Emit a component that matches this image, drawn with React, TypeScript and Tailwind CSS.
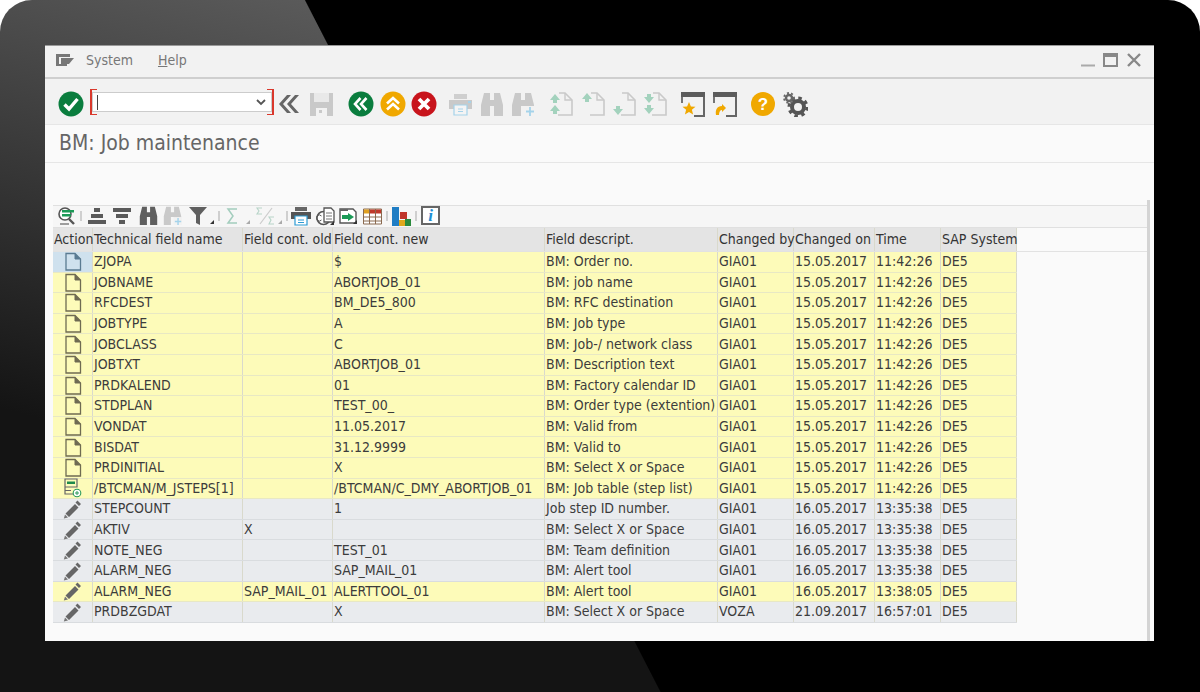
import type { ReactNode } from "react";

type Row = {
  icon: "doc" | "pen" | "tree";
  name: string;
  oldVal: string;
  newVal: string;
  descr: string;
  by: string;
  on: string;
  time: string;
  yellow: boolean;
};

const doc = (name: string, newVal: string, descr: string): Row => ({
  icon: "doc",
  name,
  oldVal: "",
  newVal,
  descr,
  by: "GIA01",
  on: "15.05.2017",
  time: "11:42:26",
  yellow: true,
});

const pen = (name: string, oldVal: string, newVal: string, descr: string, time = "13:35:38"): Row => ({
  icon: "pen",
  name,
  oldVal,
  newVal,
  descr,
  by: "GIA01",
  on: "16.05.2017",
  time,
  yellow: false,
});

const ROWS: Row[] = [
  doc("ZJOPA", "$", "BM: Order no."),
  doc("JOBNAME", "ABORTJOB_01", "BM: job name"),
  doc("RFCDEST", "BM_DE5_800", "BM: RFC destination"),
  doc("JOBTYPE", "A", "BM: Job type"),
  doc("JOBCLASS", "C", "BM: Job-/ network class"),
  doc("JOBTXT", "ABORTJOB_01", "BM: Description text"),
  doc("PRDKALEND", "01", "BM: Factory calendar ID"),
  doc("STDPLAN", "TEST_00_", "BM: Order type (extention)"),
  doc("VONDAT", "11.05.2017", "BM: Valid from"),
  doc("BISDAT", "31.12.9999", "BM: Valid to"),
  doc("PRDINITIAL", "X", "BM: Select X or Space"),
  { ...doc("/BTCMAN/M_JSTEPS[1]", "/BTCMAN/C_DMY_ABORTJOB_01", "BM: Job table (step list)"), icon: "tree" },
  pen("STEPCOUNT", "", "1", "Job step ID number."),
  pen("AKTIV", "X", "", "BM: Select X or Space"),
  pen("NOTE_NEG", "", "TEST_01", "BM: Team definition"),
  pen("ALARM_NEG", "", "SAP_MAIL_01", "BM: Alert tool"),
  { ...pen("ALARM_NEG", "SAP_MAIL_01", "ALERTTOOL_01", "BM: Alert tool", "13:38:05"), yellow: true },
  { ...pen("PRDBZGDAT", "", "X", "BM: Select X or Space", "16:57:01"), by: "VOZA", on: "21.09.2017" },
];

const COLS = [
  { label: "Action", w: "w-[40px]" },
  { label: "Technical field name", w: "w-[150px]" },
  { label: "Field cont. old", w: "w-[90px]" },
  { label: "Field cont. new", w: "w-[212px]" },
  { label: "Field descript.", w: "w-[173px]" },
  { label: "Changed by", w: "w-[76px]" },
  { label: "Changed on", w: "w-[81px]" },
  { label: "Time", w: "w-[66px]" },
  { label: "SAP System", w: "w-[76px]" },
];

function Ico({ w = 26, h = 26, vb, children }: { w?: number; h?: number; vb?: string; children: ReactNode }) {
  return (
    <svg width={w} height={h} viewBox={vb ?? `0 0 ${w} ${h}`} className="shrink-0">
      {children}
    </svg>
  );
}

function Circle({ fill, children }: { fill: string; children: ReactNode }) {
  return (
    <Ico>
      <circle cx="13" cy="13" r="12.5" fill={fill} />
      {children}
    </Ico>
  );
}

function FadedPage({ dir, double }: { dir: "up" | "down"; double?: boolean }) {
  const arrow = (y: number) =>
    dir === "up" ? `M6 ${y}l-5 6h3v3h4v-3h3z` : `M6 ${y + 9}l-5 -6h3v-3h4v3h3z`;
  return (
    <Ico w={25} h={26}>
      <path d="M10 2h6l7 7v15H9" fill="none" stroke="#c9c9c9" strokeWidth="1.6" />
      <path d="M16 2v7h7" fill="none" stroke="#c9c9c9" strokeWidth="1.4" />
      {double ? (
        <>
          <path d={arrow(3)} fill="#a3d2bd" />
          <path d={arrow(14)} fill="#a3d2bd" />
        </>
      ) : (
        <path d={arrow(dir === "up" ? 2 : 15)} fill="#a3d2bd" />
      )}
    </Ico>
  );
}

function Binoculars({ color, plus, size = 24 }: { color: string; plus?: boolean; size?: number }) {
  return (
    <Ico w={size} h={size} vb="0 0 24 24">
      <path d="M4 1h6v7h4V1h6l3 12v11h-9V14h-4v10H1V13z" fill={color} />
      {plus && (
        <>
          <path d="M13 14h11v10H13z" fill="#f2f2f2" />
          <path d="M19 15v9M15 19.500h8" stroke="#a5d3ea" strokeWidth="1.8" />
        </>
      )}
    </Ico>
  );
}

function Win({ children }: { children: ReactNode }) {
  return (
    <Ico w={26} h={26}>
      <path d="M24 1v24h-10" fill="none" stroke="#666" strokeWidth="2" />
      <path d="M1 1h24v5H1z" fill="#5c5c5c" />
      <path d="M2 6v6" stroke="#666" strokeWidth="1.8" />
      {children}
    </Ico>
  );
}

function DocIcon({ color }: { color: string }) {
  return (
    <Ico w={18} h={19}>
      <path d="M2 1.500h9l5.500 5.500v11H2z" fill="none" stroke={color} strokeWidth="1.300" />
      <path d="M11 1.500v5.500h5.500" fill={color} stroke={color} strokeWidth="1" />
    </Ico>
  );
}

function PenIcon() {
  return (
    <Ico w={20} h={20}>
      <path d="M14.500 1.500l3.500 3.500-2 2-3.500-3.500zM12 5l3.500 3.500L6 18l-3.500-3.500z" fill="#666" />
      <path d="M2 15.500L5 18.500 0.800 19.500z" fill="#777" />
    </Ico>
  );
}

function TreeIcon() {
  return (
    <Ico w={18} h={20}>
      <path d="M1 1h12v8H1zM1 9v7h8" fill="none" stroke="#666" strokeWidth="1.200" />
      <path d="M3 3.500h8v2.500H3z" fill="#1f8a4c" />
      <path d="M1 12.500h6" stroke="#666" strokeWidth="1" />
      <circle cx="13" cy="15" r="3.800" fill="#fff" stroke="#2a9a5a" strokeWidth="1.100" />
      <path d="M13 13v4M11 15h4" stroke="#2a9a5a" strokeWidth="1" />
    </Ico>
  );
}

function Tb({ children, w = 19, ml = "ml-0" }: { children: ReactNode; w?: number; ml?: string }) {
  return (
    <svg width={w} height={20} viewBox={`0 0 ${w} 20`} className={`shrink-0 ${ml}`}>
      {children}
    </svg>
  );
}

function TbSep({ ml }: { ml: string }) {
  return <div className={`h-[10px] w-[2px] shrink-0 bg-[#cfcfcf] ${ml}`} />;
}

function TableToolbar() {
  return (
    <div className="flex h-[23px] items-center border-y border-[#e0e0e0] bg-[#f6f6f6] pb-[2px] pl-[4px]">
      <Tb w={18}>
        <circle cx="8" cy="8" r="6" fill="#fff" stroke="#555" strokeWidth="1.600" />
        <path d="M5 4h12v2.500H5zM5 8h9v2.500H5z" fill="#1b9a57" />
        <path d="M12 13l5 5" stroke="#555" strokeWidth="2.400" />
        <path d="M3 18h9" stroke="#777" strokeWidth="1.400" />
      </Tb>
      <TbSep ml="ml-[5px]" />
      <Tb w={20} ml="ml-[5px]">
        <path d="M7 2h6v4H7zM4 8h12v4H4zM1 14h18v4H1z" fill="#5a5a5a" />
      </Tb>
      <Tb w={20} ml="ml-[5px]">
        <path d="M1 2h18v4H1zM4 8h12v4H4zM7 14h6v4H7z" fill="#5a5a5a" />
      </Tb>
      <div className="ml-[7px]">
        <Binoculars color="#5f5f5f" size={19} />
      </div>
      <div className="ml-[5px]">
        <Binoculars color="#c9c9c9" plus size={19} />
      </div>
      <Tb w={27} ml="ml-[6px]">
        <path d="M1 1h18l-7 8v10l-4-2V9z" fill="#5f5f5f" />
        <path d="M22 18l4-4v4z" fill="#333" />
      </Tb>
      <TbSep ml="ml-[3px]" />
      <Tb w={28} ml="ml-[3px]">
        <path d="M14 3H5l5 7-5 7h9" fill="none" stroke="#a3cdbd" strokeWidth="1.500" />
        <path d="M23 18l4-4v4z" fill="#aaa" />
      </Tb>
      <Tb w={29} ml="ml-[4px]">
        <path d="M5 18L17 2" stroke="#ccc" strokeWidth="1.200" />
        <path d="M7 2H2l2 3-2 3h5M19 11h-5l2 3-2 4h5" fill="none" stroke="#b7d4c8" strokeWidth="1.100" />
        <path d="M23 18l4-4v4z" fill="#aaa" />
      </Tb>
      <TbSep ml="ml-[2px]" />
      <Tb w={20} ml="ml-[3px]">
        <path d="M4 1h12v4H4z" fill="#666" />
        <path d="M0 6h20v7H0z" fill="#555" />
        <path d="M4 10h12v9H4z" fill="#fff" stroke="#2c9bd4" strokeWidth="1.200" />
        <path d="M7 14h6M7 16.500h6" stroke="#2c9bd4" />
      </Tb>
      <Tb w={19} ml="ml-[5px]">
        <circle cx="7.500" cy="12" r="6.500" fill="#fff" stroke="#555" strokeWidth="1.500" />
        <path d="M5.500 10a3 3 0 1 0 0 4" fill="none" stroke="#555" />
        <path d="M8 2h7l3 3v11H8z" fill="#fff" stroke="#555" strokeWidth="1.300" />
        <path d="M10 7h6M10 10h6M10 13h6" stroke="#777" />
        <path d="M14 19l4-4v4z" fill="#333" />
      </Tb>
      <Tb w={19} ml="ml-[4px]">
        <path d="M1 3h13l3 3v11H1z" fill="#fff" stroke="#555" strokeWidth="1.400" />
        <path d="M1 3h8v2H1z" fill="#666" />
        <path d="M3 9h6V7l6 4-6 4v-2H3z" fill="#1b9a57" />
        <path d="M14 18l4-4v4z" fill="#333" />
      </Tb>
      <Tb w={19} ml="ml-[5px]">
        <path d="M.5 3h18v15H.5z" fill="#fff" stroke="#8a6a50" strokeWidth="1" />
        <path d="M1 3.500h5.500v4H1z" fill="#e0a020" />
        <path d="M6.500 3.500H18v4H6.500z" fill="#c0392b" />
        <path d="M1 11h17M1 15h17M6.500 3v15M12.500 3v15" stroke="#8a6a50" strokeWidth="1" />
      </Tb>
      <TbSep ml="ml-[4px]" />
      <Tb w={19} ml="ml-[4px]">
        <path d="M0 1h7v19H0z" fill="#1f7dc4" />
        <path d="M8 6h7v7H8z" fill="#c0352b" />
        <path d="M7 14h6v6H7z" fill="#e0a81c" />
        <path d="M13 13h6v7h-6z" fill="#2a8a3c" />
      </Tb>
      <TbSep ml="ml-[4px]" />
      <div className="ml-[4px] flex h-[19px] w-[19px] shrink-0 items-center justify-center border-2 border-[#666] bg-white font-['Liberation_Serif',serif] text-[17px] font-bold italic leading-none text-[#1f8fd4]">
        i
      </div>
    </div>
  );
}

function Cell({ w, children, center }: { w: string; children?: ReactNode; center?: boolean }) {
  return (
    <div
      className={`flex h-full shrink-0 items-center whitespace-nowrap border-r border-[#d9d9cc] pl-[1px] ${w} ${center ? "justify-center" : ""}`}
    >
      {children}
    </div>
  );
}

export default function App() {
  return (
    <div className="h-[692px] w-[1200px] overflow-hidden bg-white">
      <div className="h-full w-full rounded-t-[32px] bg-[linear-gradient(62.8deg,transparent_587px,#000_588px),linear-gradient(195deg,#7c7c7c_0%,#141414_72%)] pl-[45px] pt-[45px] font-['DejaVu_Sans_Condensed','DejaVu_Sans',sans-serif] text-[14px] text-[#444]">
        <div className="flex h-[596px] w-[1109px] flex-col border-t border-[#999] bg-[#fafafa]">
          {/* menu bar */}
          <div className="flex h-[33px] shrink-0 items-center justify-between border-b-2 border-[#cfcfcf] bg-[#f2f2f2] pb-[3px] pl-[10px] pr-[13px] text-[#777]">
            <div className="flex items-center">
              <svg width="19" height="14" viewBox="0 0 19 14">
                <path d="M1 1h14v3H4v7h8v2H1z" fill="#777" />
                <path d="M6 5h13l-5 6H6z" fill="#777" />
              </svg>
              <span className="ml-[12px]">System</span>
              <span className="ml-[25px]">
                <span className="underline">H</span>elp
              </span>
            </div>
            <div className="flex items-center">
              <svg width="16" height="14" viewBox="0 0 16 14">
                <path d="M1 12.500h14" stroke="#aaa" strokeWidth="2" />
              </svg>
              <svg className="ml-[7px]" width="15" height="14" viewBox="0 0 15 14">
                <path d="M1 1h13v12H1z" fill="none" stroke="#888" strokeWidth="2" />
                <path d="M1 1h13v3H1z" fill="#888" />
              </svg>
              <svg className="ml-[9px]" width="14" height="14" viewBox="0 0 14 14">
                <path d="M1 1l12 12M13 1L1 13" stroke="#888" strokeWidth="2.400" />
              </svg>
            </div>
          </div>

          {/* main toolbar */}
          <div className="flex h-[46px] shrink-0 items-center border-b border-[#e6e6e6] bg-[#f2f2f2] pl-[13px] pt-[5px]">
            <Circle fill="#0a7d3e">
              <path d="M6.500 13.500l4.500 4.500 8.500-10" fill="none" stroke="#fff" strokeWidth="3.400" />
            </Circle>
            <div className="relative ml-[6px] h-[26px] w-[184px] -translate-y-[2px]">
              <div className="absolute inset-x-[2px] inset-y-[3px] border border-[#ccc] bg-white" />
              <div className="absolute left-[7px] top-[6px] h-[15px] w-px bg-[#444]" />
              <svg className="absolute right-[8px] top-[10px]" width="10" height="7" viewBox="0 0 10 7">
                <path d="M1 1l4 4 4-4" fill="none" stroke="#555" strokeWidth="1.800" />
              </svg>
              <div className="absolute left-0 top-0 h-[26px] w-[7px] border-y border-l-2 border-[#d9382c]" />
              <div className="absolute right-0 top-0 h-[26px] w-[7px] border-y border-r-2 border-[#d9382c]" />
            </div>
            <div className="ml-[3px]">
              <Ico w={22} h={20}>
                <path d="M10 1l-8 9 8 9h4l-8-9 8-9zM18 1l-8 9 8 9h4l-8-9 8-9z" fill="#666" />
              </Ico>
            </div>
            <div className="ml-[10px]">
              <Ico w={25} h={25}>
                <path d="M1 1h23v23H1z" fill="#c9c9c9" />
                <path d="M5 1h15v9H5z" fill="#e9e9e9" />
                <path d="M7 16h11v8H7z" fill="#f2f2f2" />
                <path d="M10 18h3v3h-3z" fill="#c9c9c9" />
              </Ico>
            </div>
            <div className="ml-[14px]">
              <Circle fill="#0a7d3e">
                <path d="M12.500 7l-5.500 6 5.500 6M18.500 7l-5.500 6 5.500 6" fill="none" stroke="#fff" strokeWidth="2.600" />
              </Circle>
            </div>
            <div className="ml-[6px]">
              <Circle fill="#f0a800">
                <path d="M7 12.500l6-5.500 6 5.500M7 18.500l6-5.500 6 5.500" fill="none" stroke="#fff" strokeWidth="2.600" />
              </Circle>
            </div>
            <div className="ml-[5px]">
              <Circle fill="#c8141c">
                <path d="M8 8l10 10M18 8L8 18" stroke="#fff" strokeWidth="3.800" />
              </Circle>
            </div>
            <div className="ml-[11px]">
              <Ico w={25} h={25}>
                <path d="M6 2h13v5H6z" fill="#cfcfcf" />
                <path d="M1 8h23v9H1z" fill="#c9c9c9" />
                <path d="M6 13h13v10H6z" fill="#f4f4f4" stroke="#a5d3ea" strokeWidth="1.200" />
                <path d="M10 17h5M10 19.500h5" stroke="#a5d3ea" />
                <path d="M20 9h3v2h-3z" fill="#a5d3ea" />
              </Ico>
            </div>
            <div className="ml-[7px]">
              <Binoculars color="#c9c9c9" />
            </div>
            <div className="ml-[7px]">
              <Binoculars color="#c9c9c9" plus />
            </div>
            <div className="ml-[14px]">
              <FadedPage dir="up" double />
            </div>
            <div className="ml-[7px]">
              <FadedPage dir="up" />
            </div>
            <div className="ml-[6px]">
              <FadedPage dir="down" />
            </div>
            <div className="ml-[6px]">
              <FadedPage dir="down" double />
            </div>
            <div className="ml-[12px]">
              <Win>
                <path d="M9 11l1.900 4.500 4.600.300-3.600 3 1.200 4.700L9 21l-4.100 2.500 1.200-4.700-3.600-3 4.600-.300z" fill="#f0a800" />
              </Win>
            </div>
            <div className="ml-[6px]">
              <Win>
                <path d="M4 24c-1-5 1-9 6-9v-2l4 4-4 4v-2c-2 0-3 2-3 5z" fill="#f0a800" />
              </Win>
            </div>
            <div className="ml-[13px]">
              <Ico w={24} h={24}>
                <circle cx="12" cy="12" r="12" fill="#f0a800" />
                <text x="12" y="18" textAnchor="middle" fontSize="17" fontWeight="700" fill="#fff" fontFamily="Liberation Sans, sans-serif">
                  ?
                </text>
              </Ico>
            </div>
            <div className="ml-[8px]">
              <Ico w={25} h={25}>
                <circle cx="15" cy="15" r="6" fill="none" stroke="#555" strokeWidth="4" />
                <circle cx="15" cy="15" r="9" fill="none" stroke="#555" strokeWidth="3" strokeDasharray="3.500 3.570" />
                <circle cx="6" cy="6" r="3" fill="none" stroke="#666" strokeWidth="2.400" />
                <circle cx="6" cy="6" r="5" fill="none" stroke="#666" strokeWidth="1.800" strokeDasharray="2 2.180" />
              </Ico>
            </div>
          </div>

          {/* title */}
          <div className="flex h-[38px] shrink-0 items-center border-b border-[#e6e6e6] bg-[#fafafa] pl-[14px] text-[21px] text-[#666]">
            BM: Job maintenance
          </div>

          {/* grid */}
          <div className="flex min-h-0 flex-1 pl-[8px] pr-[4px] pt-[37px]">
            <div className="flex-1 border-r-[3px] border-r-[#d4d4d4] pt-[5px]">
              <TableToolbar />
              <div className="flex h-[24px] items-center border-b border-[#e2e2e2]">
                <div className="flex h-full bg-[#e4e4e4] text-[#333]">
                  {COLS.map((c) => (
                    <Cell key={c.label} w={c.w}>
                      {c.label}
                    </Cell>
                  ))}
                </div>
              </div>
              {ROWS.map((r, i) => (
                <div
                  key={i}
                  className={`flex h-[20.6px] w-[964px] border-b text-[#3c3c3c] ${r.yellow ? "border-[#e8e8c4] bg-[#fdfbb9]" : "border-[#d9dcdf] bg-[#e9ebee]"}`}
                >
                  <Cell w={`w-[40px] ${i === 0 ? "bg-[#cfe1ee]" : ""}`} center>
                    {r.icon === "doc" && <DocIcon color={i === 0 ? "#5b7b92" : "#6f6b52"} />}
                    {r.icon === "pen" && <PenIcon />}
                    {r.icon === "tree" && <TreeIcon />}
                  </Cell>
                  <Cell w="w-[150px]">{r.name}</Cell>
                  <Cell w="w-[90px]">{r.oldVal}</Cell>
                  <Cell w="w-[212px]">{r.newVal}</Cell>
                  <Cell w="w-[173px]">{r.descr}</Cell>
                  <Cell w="w-[76px]">{r.by}</Cell>
                  <Cell w="w-[81px]">{r.on}</Cell>
                  <Cell w="w-[66px]">{r.time}</Cell>
                  <Cell w="w-[76px]">DE5</Cell>
                </div>
              ))}
            </div>
          </div>
        </div>
      </div>
    </div>
  );
}
